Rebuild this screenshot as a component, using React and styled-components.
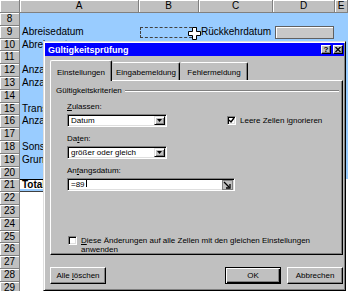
import React from 'react'
import styled, { createGlobalStyle } from 'styled-components'

const GlobalStyle = createGlobalStyle`
  html, body {
    margin: 0;
    padding: 0;
    background: #fff;
  }
  body {
    width: 348px;
    height: 291px;
    overflow: hidden;
    font-family: "Liberation Sans", Arial, sans-serif;
  }
`

const Screen = styled.div`
  position: relative;
  width: 348px;
  height: 291px;
  overflow: hidden;
  background: #fff;
`

/* ---------- spreadsheet ---------- */

const Sheet = styled.div`
  display: flex;
  flex-direction: column;
  font-size: 10px;
  color: #000;
`

const Row = styled.div`
  display: grid;
  grid-template-columns: 20px 119px 60px 74px 62px 1fr;
  height: ${(p) => (p.$head ? '13px' : '12.8px')};
  background: ${(p) => (p.$blue ? '#99ccff' : '#fff')};
`

const HeadCell = styled.div`
  box-sizing: border-box;
  background: #c0c0c0;
  border-right: 1px solid #808080;
  border-bottom: 1px solid #808080;
  box-shadow: inset 1px 1px #fff;
  text-align: center;
  line-height: 12px;
  overflow: hidden;
`

const Cell = styled.div`
  position: relative;
  box-sizing: border-box;
  padding-left: 2px;
  white-space: nowrap;
  line-height: 12.8px;
`

const TotalCell = styled(Cell)`
  background: #fff;
  font-weight: bold;
  border-top: 1px solid #000;
  border-bottom: 1px solid #404040;
  box-shadow: inset 0 -2px #99ccff;
  line-height: 10px;
`

const Marquee = styled.div`
  box-sizing: border-box;
  height: 11px;
  margin: 1px 2px 0 -1px;
  border: 1px dashed #404040;
`

const RefBox = styled.div`
  box-sizing: border-box;
  height: 13px;
  margin: 0 1px 0 0;
  background: #c8c8c8;
  border: 1px solid #606060;
  box-shadow: inset 1px 1px #fff;
`

const Cursor = styled.svg`
  position: absolute;
  left: 49px;
  top: 1px;
`

/* ---------- dialog ---------- */

const Dialog = styled.div`
  position: absolute;
  left: 43px;
  top: 41px;
  width: 303px;
  height: 250px;
  box-sizing: border-box;
  background: #c0c0c0;
  border: 1px solid;
  border-color: #dfdfdf #000 #000 #dfdfdf;
  box-shadow: inset 1px 1px #fff, inset -1px -1px #808080;
  padding: 1px;
  display: flex;
  flex-direction: column;
  font-family: "Liberation Sans", Arial, sans-serif;
  font-size: 8px;
  color: #000;
`

const TitleBar = styled.div`
  height: 13px;
  background: #0000ff;
  display: flex;
  align-items: center;
  padding: 0 1px 0 3px;
  color: #fff;
`

const TitleText = styled.div`
  flex: 1;
  font-size: 9px;
  font-weight: bold;
`

const TitleButton = styled.div`
  width: 10px;
  height: 9px;
  margin-left: 2px;
  box-sizing: border-box;
  background: #c0c0c0;
  border: 1px solid;
  border-color: #fff #000 #000 #fff;
  box-shadow: inset -1px -1px #808080;
  display: flex;
  align-items: center;
  justify-content: center;
  color: #000;
  font-size: 8px;
  font-weight: bold;
  line-height: 7px;
`

const Body = styled.div`
  display: flex;
  flex-direction: column;
  padding: 0 1px 0 5px;
`

const TabStrip = styled.div`
  display: flex;
  align-items: flex-end;
  height: 20px;
  margin-top: 4px;
  position: relative;
  z-index: 1;
`

const Tab = styled.div`
  box-sizing: border-box;
  width: ${(p) => p.$w}px;
  height: ${(p) => (p.$active ? '21px' : '18px')};
  margin-bottom: ${(p) => (p.$active ? '-1px' : '0')};
  padding-top: ${(p) => (p.$active ? '7px' : '5px')};
  background: #c0c0c0;
  border-top: 1px solid #fff;
  border-left: 1px solid ${(p) => (p.$active ? '#fff' : '#c0c0c0')};
  border-right: 1px solid #000;
  border-radius: 2px 2px 0 0;
  box-shadow: inset -1px 0 #808080;
  text-align: center;
  line-height: 10px;
  white-space: nowrap;
`

const Panel = styled.div`
  box-sizing: border-box;
  height: 175px;
  border: 1px solid;
  border-color: #fff #000 #000 #fff;
  box-shadow: inset -1px -1px #808080;
  padding: 0 3px 0 5px;
  display: flex;
  flex-direction: column;
`

const GroupHeader = styled.div`
  display: flex;
  align-items: center;
  gap: 3px;
  height: 10px;
  margin-top: 5px;
`

const Rule = styled.div`
  flex: 1;
  border-top: 1px solid #808080;
  border-bottom: 1px solid #fff;
`

const Criteria = styled.div`
  display: flex;
  flex-direction: column;
  align-items: flex-start;
  margin-left: 11px;
`

const FieldLabel = styled.div`
  height: 10px;
  line-height: 10px;
  margin-top: 7px;
  margin-bottom: 2px;
`

const FieldRow = styled.div`
  display: flex;
  align-items: center;
  gap: 60px;
`

const Sunken = styled.div`
  box-sizing: border-box;
  flex: none;
  width: ${(p) => p.$w}px;
  height: 13px;
  background: #fff;
  border: 1px solid;
  border-color: #808080 #fff #fff #808080;
  box-shadow: inset 1px 1px #000, inset -1px -1px #dfdfdf;
  display: flex;
  align-items: center;
  padding: 0 1px 0 3px;
  line-height: 10px;
  white-space: nowrap;
`

const SelectText = styled.span`
  flex: 1;
`

const DropButton = styled.div`
  box-sizing: border-box;
  width: 11px;
  height: 9px;
  background: #c0c0c0;
  border: 1px solid;
  border-color: #dfdfdf #000 #000 #dfdfdf;
  box-shadow: inset 1px 1px #fff, inset -1px -1px #808080;
  display: flex;
  align-items: center;
  justify-content: center;
`

const Caret = styled.span`
  display: inline-block;
  width: 1px;
  height: 8px;
  margin-left: 1px;
  background: #000;
`

const CheckRow = styled.div`
  display: flex;
  align-items: flex-start;
  gap: 4px;
  margin-top: ${(p) => p.$mt || 0}px;
  margin-left: ${(p) => p.$ml || 0}px;
  line-height: 9px;
`

const CheckBox = styled.div`
  box-sizing: border-box;
  flex: none;
  width: 9px;
  height: 9px;
  background: #fff;
  border: 1px solid;
  border-color: #808080 #fff #fff #808080;
  box-shadow: inset 1px 1px #000, inset -1px -1px #dfdfdf;
  display: flex;
  align-items: center;
  justify-content: center;
`

const ButtonRow = styled.div`
  display: flex;
  justify-content: space-between;
  margin-top: 12px;
`

const ButtonGroup = styled.div`
  display: flex;
  gap: 6px;
`

const Button = styled.div`
  box-sizing: border-box;
  width: 56px;
  height: 17px;
  background: #c0c0c0;
  border: 1px solid;
  border-color: ${(p) => (p.$def ? '#000' : '#fff #000 #000 #fff')};
  box-shadow: ${(p) =>
    p.$def
      ? 'inset 1px 1px #fff, inset -1px -1px #000, inset -2px -2px #808080'
      : 'inset -1px -1px #808080'};
  display: flex;
  align-items: center;
  justify-content: center;
  line-height: 10px;
`

const U = styled.span`
  text-decoration: underline;
`

const rows = [
  { n: 8 },
  { n: 9, a: 'Abreisedatum', b: 'marquee', c: 'Rückkehrdatum', d: 'box' },
  { n: 10, a: 'Abreiseort' },
  { n: 11 },
  { n: 12, a: 'Anzahl Erwachsene' },
  { n: 13, a: 'Anzahl Kinder' },
  { n: 14 },
  { n: 15, a: 'Transportmittel' },
  { n: 16, a: 'Anzahl Tage' },
  { n: 17 },
  { n: 18, a: 'Sonstiges' },
  { n: 19, a: 'Grund der Reise' },
  { n: 20 },
  { n: 21, a: 'Total', total: true },
  { n: 22 },
  { n: 23 },
  { n: 24 },
  { n: 25 },
  { n: 26 },
  { n: 27 },
  { n: 28 },
  { n: 29 },
]

const CheckMark = () => (
  <svg width="7" height="7" viewBox="0 0 7 7">
    <path d="M1 3 L3 5 L6 1" fill="none" stroke="#000" strokeWidth="1.4" />
  </svg>
)

const DropArrow = () => (
  <svg width="5" height="3" viewBox="0 0 5 3">
    <path d="M0 0 H5 L2.5 3 Z" fill="#000" />
  </svg>
)

const App = () => {
  return (
    <Screen>
      <GlobalStyle />
      <Sheet>
        <Row $head>
          <HeadCell />
          <HeadCell>A</HeadCell>
          <HeadCell>B</HeadCell>
          <HeadCell>C</HeadCell>
          <HeadCell>D</HeadCell>
          <HeadCell>E</HeadCell>
        </Row>
        {rows.map((r) => (
          <Row key={r.n} $blue={r.n <= 20}>
            <HeadCell>{r.n}</HeadCell>
            {r.total ? <TotalCell>{r.a}</TotalCell> : <Cell>{r.a}</Cell>}
            <Cell>
              {r.b === 'marquee' && <Marquee />}
              {r.b === 'marquee' && (
                <Cursor width="13" height="13" viewBox="0 0 13 13">
                  <path
                    d="M4.5 0.5 H8.5 V4.5 H12.5 V8.5 H8.5 V12.5 H4.5 V8.5 H0.5 V4.5 H4.5 Z"
                    fill="#fff"
                    stroke="#000"
                  />
                </Cursor>
              )}
            </Cell>
            <Cell>{r.c}</Cell>
            <Cell>{r.d === 'box' && <RefBox />}</Cell>
            <Cell />
          </Row>
        ))}
      </Sheet>

      <Dialog>
        <TitleBar>
          <TitleText>Gültigkeitsprüfung</TitleText>
          <TitleButton>?</TitleButton>
          <TitleButton>
            <svg width="6" height="5" viewBox="0 0 6 5">
              <path d="M0.5 0 L5.5 5 M5.5 0 L0.5 5" stroke="#000" strokeWidth="1.3" />
            </svg>
          </TitleButton>
        </TitleBar>

        <Body>
          <TabStrip>
            <Tab $w={62} $active>Einstellungen</Tab>
            <Tab $w={68}>Eingabemeldung</Tab>
            <Tab $w={68}>Fehlermeldung</Tab>
          </TabStrip>

          <Panel>
            <GroupHeader>
              <span>Gültigkeitskriterien</span>
              <Rule />
            </GroupHeader>

            <Criteria>
              <FieldLabel>
                <U>Z</U>ulassen:
              </FieldLabel>
              <FieldRow>
                <Sunken $w={100}>
                  <SelectText>Datum</SelectText>
                  <DropButton>
                    <DropArrow />
                  </DropButton>
                </Sunken>
                <CheckRow>
                  <CheckBox>
                    <CheckMark />
                  </CheckBox>
                  <span>Leere Zellen i<U>g</U>norieren</span>
                </CheckRow>
              </FieldRow>

              <FieldLabel>
                Da<U>t</U>en:
              </FieldLabel>
              <Sunken $w={100}>
                <SelectText>größer oder gleich</SelectText>
                <DropButton>
                  <DropArrow />
                </DropButton>
              </Sunken>

              <FieldLabel>
                An<U>f</U>angsdatum:
              </FieldLabel>
              <Sunken $w={168}>
                <SelectText>
                  =89
                  <Caret />
                </SelectText>
                <svg width="11" height="10" viewBox="0 0 11 10">
                  <rect x="0.5" y="0.5" width="10" height="9" fill="#c0c0c0" stroke="#808080" />
                  <path d="M2 2 L7 7" stroke="#000" strokeWidth="1.3" />
                  <path d="M4 8 H8 V4" fill="none" stroke="#000" strokeWidth="1.3" />
                </svg>
              </Sunken>
            </Criteria>

            <CheckRow $mt={45} $ml={12}>
              <CheckBox />
              <span>
                <U>D</U>iese Änderungen auf alle Zellen mit den gleichen Einstellungen
                <br />
                anwenden
              </span>
            </CheckRow>
          </Panel>

          <ButtonRow>
            <Button>
              <span>
                Alle <U>l</U>öschen
              </span>
            </Button>
            <ButtonGroup>
              <Button $def>OK</Button>
              <Button>Abbrechen</Button>
            </ButtonGroup>
          </ButtonRow>
        </Body>
      </Dialog>
    </Screen>
  )
}

export default App
